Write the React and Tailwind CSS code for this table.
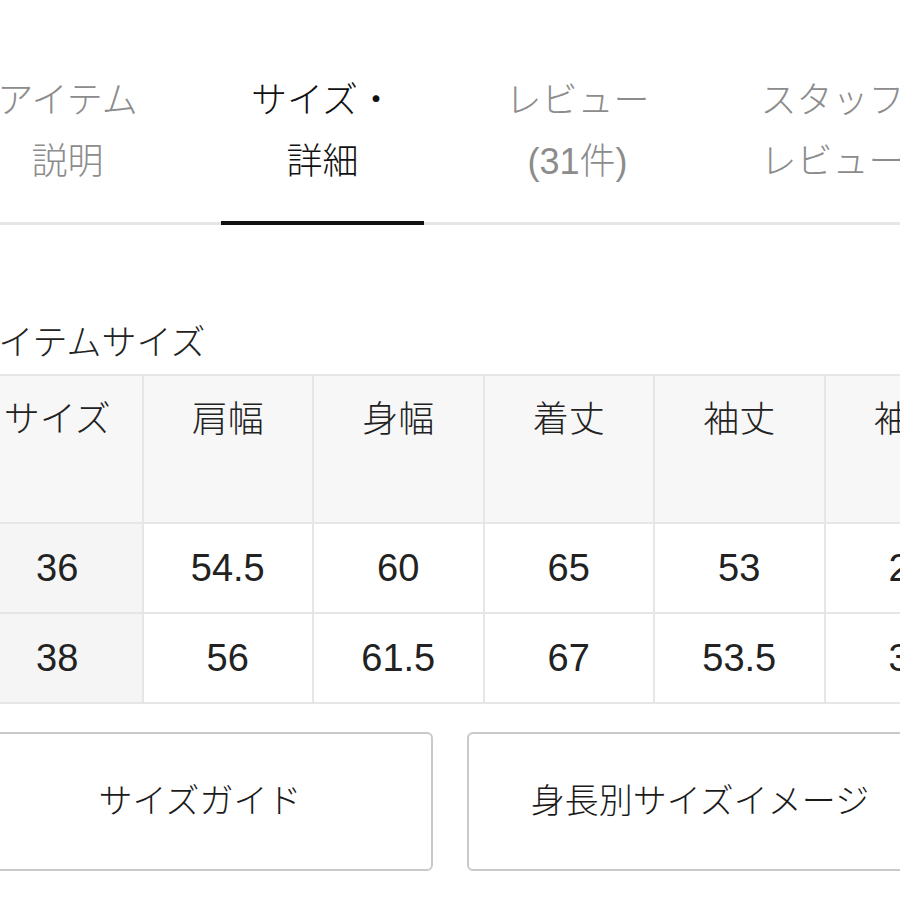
import React from "react";

const FONT = { fontFamily: '"Liberation Sans", "Noto Sans CJK JP", sans-serif' };

const tabs = [
  { l1: "アイテム", l2: "説明", active: false },
  { l1: "サイズ・", l2: "詳細", active: true },
  { l1: "レビュー", l2: "(31件)", active: false },
  { l1: "スタッフ", l2: "レビュー", active: false },
];

const headers = ["サイズ", "肩幅", "身幅", "着丈", "袖丈", "袖口"];
const rows = [
  ["36", "54.5", "60", "65", "53", "26"],
  ["38", "56", "61.5", "67", "53.5", "30"],
];

export default function App() {
  return (
    <div
      className="w-[900px] h-[900px] overflow-hidden bg-white text-[#1a1a1a] font-light"
      style={FONT}
    >
      {/* Tabs */}
      <div className="flex ml-[-60px] w-[1020px] pt-[70px]">
        {tabs.map((t, i) => (
          <div
            key={i}
            className="w-[255px] shrink-0 border-b-[3px] border-[#e6e6e6]"
          >
            <div
              className={
                "mx-[26px] -mb-[3px] pb-[29px] border-b-[4px] flex flex-col items-center text-[36px] leading-[61px] " +
                (t.active
                  ? "border-[#111] text-[#111]"
                  : "border-transparent text-[#8c8c8c]")
              }
            >
              <span className="whitespace-nowrap">{t.l1}</span>
              <span className="whitespace-nowrap">{t.l2}</span>
            </div>
          </div>
        ))}
      </div>

      {/* Title */}
      <div className="ml-[-35px] mt-[94px] text-[35px] leading-[48px] text-[#222] whitespace-nowrap">
        アイテムサイズ
      </div>

      {/* Table */}
      <div className="ml-[-29px] mt-[7px] w-[1030px] grid grid-cols-[repeat(6,168.5px)] gap-[2px] p-[2px] bg-[#e6e6e6]">
        {headers.map((h, i) => (
          <div
            key={"h" + i}
            className="h-[146px] bg-[#f7f7f7] flex justify-center pt-[17px] text-[36px] leading-[54px] text-[#222] whitespace-nowrap"
          >
            {h}
          </div>
        ))}
        {rows.map((r, ri) =>
          r.map((v, ci) => (
            <div
              key={ri + "-" + ci}
              className={
                "h-[88px] flex items-center justify-center text-[38px] leading-none text-[#222] " +
                (ci === 0 ? "bg-[#f5f5f5]" : "bg-white")
              }
            >
              {v}
            </div>
          ))
        )}
      </div>

      {/* Buttons */}
      <div className="flex ml-[-33px] mt-[28px] gap-[34px] w-[1000px]">
        <div className="w-[466px] h-[139px] shrink-0 border-2 border-[#c9c9c9] rounded-[6px] flex items-center justify-center text-[34px] text-[#1a1a1a] whitespace-nowrap">
          サイズガイド
        </div>
        <div className="w-[466px] h-[139px] shrink-0 border-2 border-[#c9c9c9] rounded-[6px] flex items-center justify-center text-[34px] text-[#1a1a1a] whitespace-nowrap">
          身長別サイズイメージ
        </div>
      </div>
    </div>
  );
}
